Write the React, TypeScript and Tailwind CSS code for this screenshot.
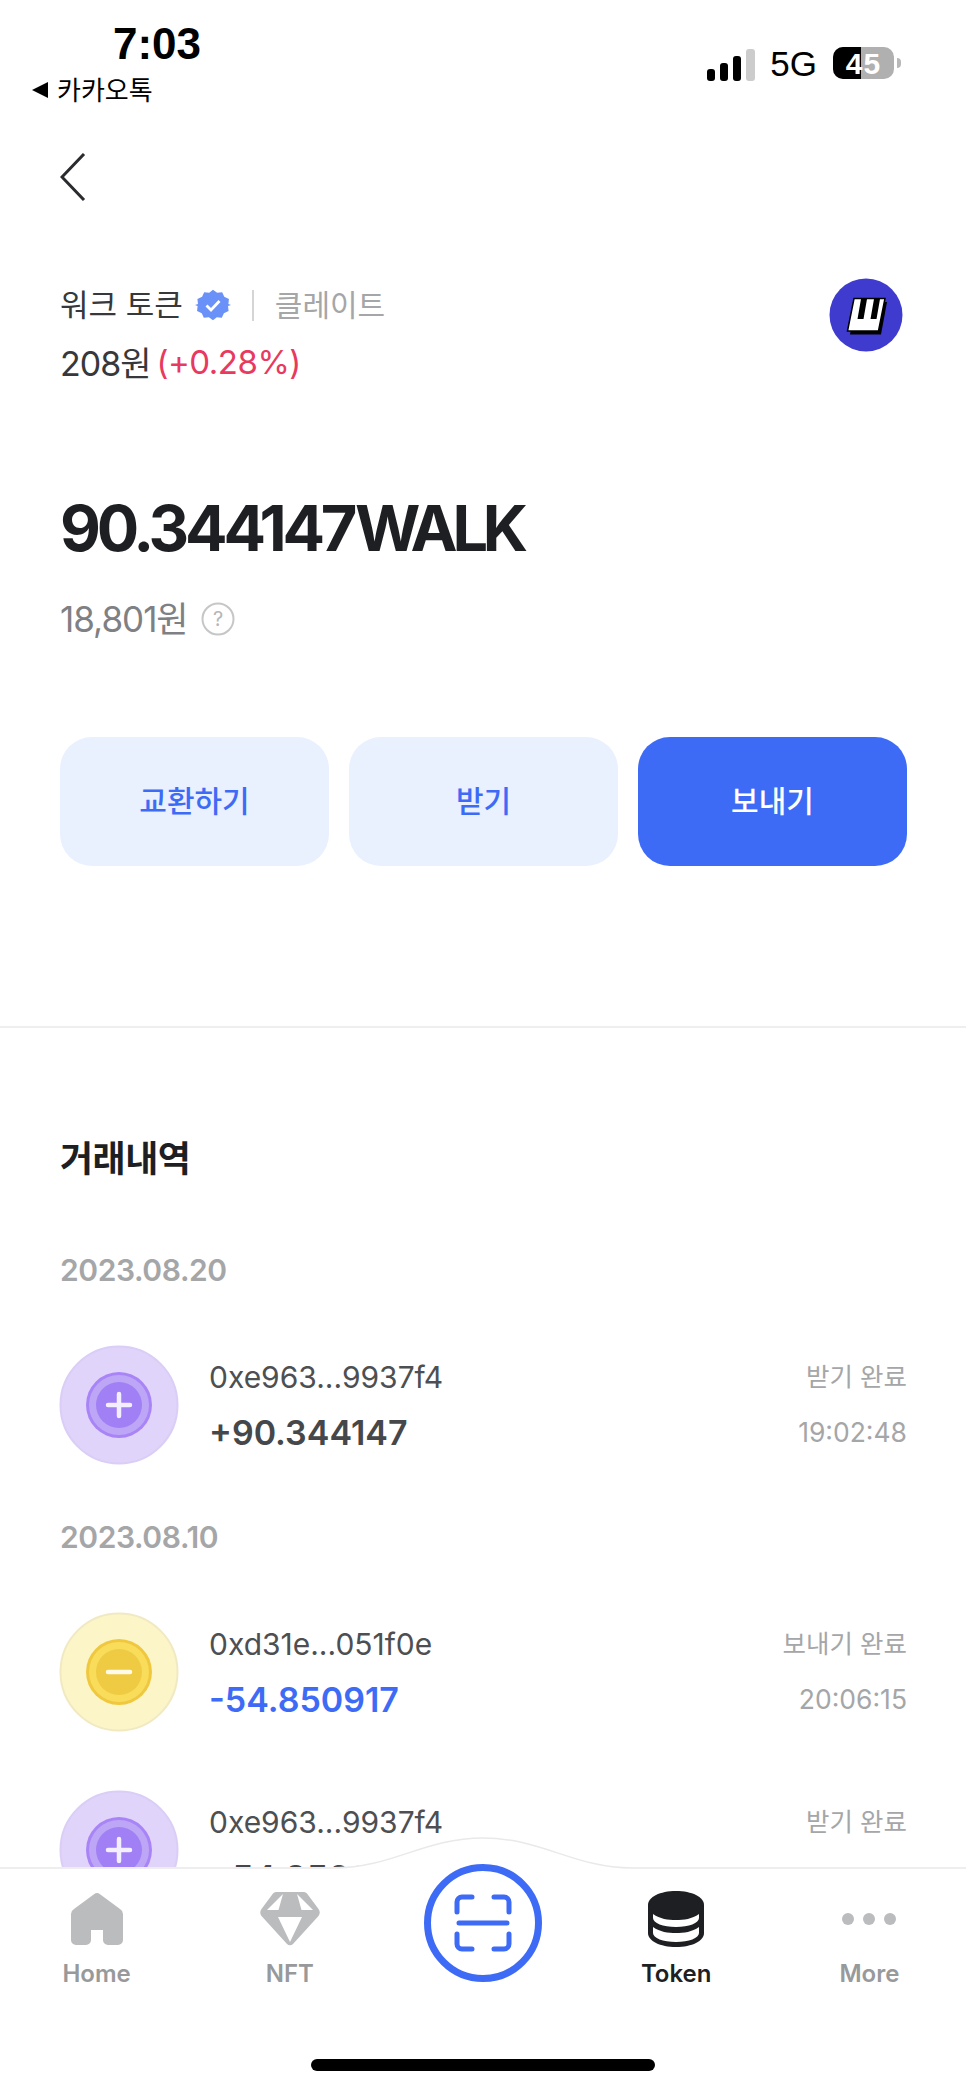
import React from 'react'

const FONT = "font-['Inter','Noto_Sans_CJK_KR',sans-serif]"

function TxIcon({ type }: { type: 'in' | 'out' }) {
  const c =
    type === 'in'
      ? { outer: '#e0d4fb', edge: '#dacdf6', ring: '#a884f6', mid: '#bea6f7', core: '#a17ff5', mark: '#f4effe' }
      : { outer: '#fcf5c8', edge: '#f1e9c1', ring: '#efc83f', mid: '#f8dc5a', core: '#efcb43', mark: '#fffbe8' }
  return (
    <svg width="120" height="120" viewBox="0 0 120 120" className="shrink-0 -ml-[1px]">
      <circle cx="60" cy="60" r="58.5" fill={c.outer} stroke={c.edge} strokeWidth="2" />
      <circle cx="60" cy="60" r="33" fill={c.ring} />
      <circle cx="60" cy="60" r="30" fill={c.mid} />
      <circle cx="60" cy="60" r="23" fill={c.core} />
      <path d={type === 'in' ? 'M49 60H71M60 49V71' : 'M49 60H71'} stroke={c.mark} strokeWidth="4.5" strokeLinecap="round" />
    </svg>
  )
}

function TxRow({ addr, amount, status, time, type, blue }: { addr: string; amount: string; status: string; time: string; type: 'in' | 'out'; blue?: boolean }) {
  return (
    <div className="flex items-center">
      <TxIcon type={type} />
      <div className="ml-[30px] flex-1">
        <div className="flex items-center justify-between h-[40px]">
          <span className="text-[30px] text-[#4d4f52]">{addr}</span>
          <span className="text-[25.5px] text-[#a5a6a8]">{status}</span>
        </div>
        <div className="flex items-center justify-between h-[40px] mt-[15px]">
          <span className={`text-[34px] font-semibold ${blue ? 'text-[#3e6bf6]' : 'text-[#45474a]'}`}>{amount}</span>
          <span className="text-[26.5px] text-[#a5a6a8]">{time}</span>
        </div>
      </div>
    </div>
  )
}

function NavItem({ label, active, children }: { label: string; active?: boolean; children: React.ReactNode }) {
  return (
    <div className="flex flex-col items-center pt-[22px]">
      <div className="h-[56px] flex items-center justify-center">{children}</div>
      <span className={`mt-[12px] text-[24px] leading-[30px] font-semibold ${active ? 'text-[#1e1f23]' : 'text-[#98999b]'}`}>{label}</span>
    </div>
  )
}

export default function App() {
  return (
    <div className={`${FONT} relative w-[966px] h-[2091px] overflow-hidden bg-white`}>
      {/* status bar */}
      <div className="flex justify-between h-[153px]">
        <div className="pl-[31px] pt-[21px]">
          <div className="pl-[82px] text-[44px] leading-[46px] font-bold text-black font-['Liberation_Sans','Noto_Sans_CJK_KR',sans-serif]">7:03</div>
          <div className="flex items-center gap-[8px] mt-[7px] h-[32px]">
            <svg width="18" height="18" viewBox="0 0 18 18"><path d="M17 1V17L1 9Z" fill="#000" /></svg>
            <span className="text-[26px] text-black">카카오톡</span>
          </div>
        </div>
        <div className="flex items-start pt-[47px] pr-[65px]">
          <svg width="48" height="32" viewBox="0 0 48 32" className="mt-[2px] ml-[2px]">
            <rect x="0" y="20" width="8" height="12" rx="3" fill="#000" />
            <rect x="13" y="14" width="8" height="18" rx="3" fill="#000" />
            <rect x="26" y="7" width="8" height="25" rx="3" fill="#000" />
            <rect x="39" y="0" width="9" height="32" rx="3" fill="#ccc" />
          </svg>
          <span className="ml-[15px] text-[35px] leading-[32px] mt-[1px] text-black font-['Liberation_Sans',sans-serif]">5G</span>
          <div className="relative ml-[16px] w-[61px] h-[32px] rounded-[10px] overflow-hidden bg-[#b0b0b0] flex items-center justify-center font-['Liberation_Sans',sans-serif]">
            <div className="absolute left-0 top-0 bottom-0 w-[28px] bg-black" />
            <span className="relative text-[30px] font-bold text-white tracking-[1px]">45</span>
          </div>
          <div className="ml-[3px] mt-[11px] w-[4px] h-[10px] rounded-r-full bg-[#b8b8b8]" />
        </div>
      </div>

      {/* back */}
      <div className="pl-[60px] h-[127px]">
        <svg width="26" height="48" viewBox="0 0 26 48" fill="none">
          <path d="M24 1L2 24L24 47" stroke="#2a2b2e" strokeWidth="3" />
        </svg>
      </div>

      {/* token summary */}
      <div className="flex justify-between px-[60px]">
        <div>
          <div className="flex items-center h-[50px]">
            <span className="text-[31px] text-[#36383b]">워크 토큰</span>
            <svg width="36" height="36" viewBox="0 0 36 36" className="ml-[12px]">
              <path
                d="M18 1l4.6 3.3 5.6-.6 2.3 5.2 5.2 2.3-.6 5.6L38 18l-3.3 1.2.6 5.6-5.2 2.3-2.3 5.2-5.6-.6L18 35l-4.6-3.3-5.6.6-2.3-5.2-5.2-2.3.6-5.6L-2 18l3.3-1.2-.6-5.6 5.2-2.3 2.3-5.2 5.6.6Z"
                transform="translate(1.8 1.8) scale(.9)"
                fill="#6a91f8"
              />
              <path d="M11.5 18.5l4.5 4.5 8.5-9" fill="none" stroke="#fff" strokeWidth="2.8" />
            </svg>
            <div className="ml-[21px] w-[2px] h-[31px] bg-[#d4d5d6]" />
            <span className="ml-[21px] text-[30px] text-[#a5a6a8]">클레이트</span>
          </div>
          <div className="flex items-center h-[50px] mt-[8px]">
            <span className="text-[34px] text-[#36383b] tracking-[-1px]">208원</span>
            <span className="ml-[6px] text-[33px] text-[#e8395f] tracking-[-0.5px]">(+0.28%)</span>
          </div>
        </div>
        <svg width="74" height="74" viewBox="0 0 74 74" className="mr-[3px] -mt-[2px]">
          <circle cx="37" cy="37" r="36.5" fill="#3e3bce" />
          <path d="M21 56.5L27 24H58L52 56.5Z" fill="#000" />
          <path d="M18.5 53L25 20.5H56L49.5 53Z" fill="#fff" stroke="#000" strokeWidth="1.5" />
          <path d="M32 21L28.5 41H34.5L38 21ZM45 21L41.5 41H47.5L51 21Z" fill="#000" />
        </svg>
      </div>

      <div className="px-[60px] mt-[102px]">
        <div className="text-[63px] leading-[76px] font-bold text-[#1e1f23] tracking-[-4.2px]">90.344147 <span className="-ml-[9px] tracking-[-5.2px]">WALK</span></div>
        <div className="flex items-center mt-[30px] h-[46px]">
          <span className="text-[35px] text-[#7f8083] tracking-[-1px]">18,801원</span>
          <svg width="34" height="34" viewBox="0 0 34 34" className="ml-[13px]" fill="none">
            <circle cx="17" cy="17" r="15.5" stroke="#c5c6c7" strokeWidth="2" />
            <text x="17" y="24" textAnchor="middle" fontSize="20" fill="#b5b6b8">?</text>
          </svg>
        </div>
      </div>

      {/* actions */}
      <div className="grid grid-cols-3 gap-[20px] pl-[60px] pr-[59px] mt-[95px]">
        <div className="h-[129px] rounded-[32px] bg-[#e9f0fe] flex items-center justify-center text-[30px] font-medium text-[#3e6bf6]">교환하기</div>
        <div className="h-[129px] rounded-[32px] bg-[#e9f0fe] flex items-center justify-center text-[30px] font-medium text-[#3e6bf6]">받기</div>
        <div className="h-[129px] rounded-[32px] bg-[#3e6bf6] flex items-center justify-center text-[30px] font-medium text-white">보내기</div>
      </div>

      <div className="mt-[160px] border-t-2 border-[#eeeeef]" />

      {/* history */}
      <div className="pl-[60px] pr-[59px]">
        <h2 className="mt-[106px] text-[36px] leading-[50px] font-bold text-[#1e1f23] tracking-[-0.5px]">거래내역</h2>
        <div className="mt-[66px] text-[30px] leading-[40px] font-semibold text-[#a5a6a8] tracking-[-0.4px]">2023.08.20</div>
        <div className="mt-[55px]">
          <TxRow addr="0xe963...9937f4" amount="+90.344147" status="받기 완료" time="19:02:48" type="in" />
        </div>
        <div className="mt-[52px] text-[30px] leading-[40px] font-semibold text-[#a5a6a8] tracking-[-0.4px]">2023.08.10</div>
        <div className="mt-[55px]">
          <TxRow addr="0xd31e...051f0e" amount="-54.850917" status="보내기 완료" time="20:06:15" type="out" blue />
        </div>
        <div className="mt-[58px]">
          <TxRow addr="0xe963...9937f4" amount="+54.850917" status="받기 완료" time="20:06:51" type="in" />
        </div>
      </div>

      {/* bottom nav */}
      <div className="absolute left-0 right-0 bottom-0 h-[224px] bg-white border-t-2 border-[#eeeeef]">
        <svg width="966" height="34" viewBox="0 0 966 34" className="absolute left-0 -top-[32px]" fill="none">
          <path d="M334 30C392 30 424 1 483 1C542 1 574 30 632 30V34H334Z" fill="#fff" />
          <path d="M334 31C392 31 424 1 483 1C542 1 574 31 632 31" stroke="#e9e9ea" strokeWidth="1.5" />
        </svg>
        <div className="relative grid grid-cols-5">
          <NavItem label="Home">
            <svg width="52" height="52" viewBox="0 0 52 52">
              <path d="M23 1.2a5 5 0 0 1 6 0L49 16a6 6 0 0 1 3 5V47a5 5 0 0 1-5 5H37a5 5 0 0 1-5-5V37H20V47a5 5 0 0 1-5 5H5a5 5 0 0 1-5-5V21a6 6 0 0 1 3-5Z" fill="#bbbcbe" />
            </svg>
          </NavItem>
          <NavItem label="NFT">
            <svg width="60" height="54" viewBox="0 0 60 54">
              <path d="M16 0H44a4 4 0 0 1 3 1.500L58.500 17a6 6 0 0 1 0 7L33 52a4 4 0 0 1-6 0L1.500 24a6 6 0 0 1 0-7L13 1.500A4 4 0 0 1 16 0Z" fill="#bbbcbe" />
              <path d="M23 2L7 18H18.500ZM37 2L53 18H41.500ZM18 25H42L30 50Z" fill="#fff" />
            </svg>
          </NavItem>
          <div className="flex justify-center -mt-[6px]">
            <svg width="120" height="120" viewBox="0 0 120 120" fill="none">
              <circle cx="60" cy="60" r="55.500" fill="#fff" stroke="#3e6bf6" strokeWidth="7" />
              <path d="M49 34H39a5 5 0 0 0-5 5V49M71 34H81a5 5 0 0 1 5 5V49M49 86H39a5 5 0 0 1-5-5V71M71 86H81a5 5 0 0 0 5-5V71M36 60H84" stroke="#3e6bf6" strokeWidth="5" strokeLinecap="round" />
            </svg>
          </div>
          <NavItem label="Token" active>
            <svg width="56" height="56" viewBox="0 0 56 56">
              <path d="M0 14C0 6 12 0 28 0S56 6 56 14V42C56 50 44 56 28 56S0 50 0 42Z" fill="#1e1f23" />
              <path d="M5 23C12 28 20 29 28 29S44 28 51 23V27C51 32 41 36 28 36S5 32 5 27ZM5 36C12 41 20 42 28 42S44 41 51 36V42C51 47 41 51 28 51S5 47 5 42Z" fill="#fff" />
            </svg>
          </NavItem>
          <NavItem label="More">
            <div className="flex gap-[9px] pb-[1px]">
              <div className="w-[12px] h-[12px] rounded-full bg-[#bbbcbe]" />
              <div className="w-[12px] h-[12px] rounded-full bg-[#bbbcbe]" />
              <div className="w-[12px] h-[12px] rounded-full bg-[#bbbcbe]" />
            </div>
          </NavItem>
        </div>
        <div className="absolute left-[311px] bottom-[20px] w-[344px] h-[12px] rounded-full bg-black" />
      </div>
    </div>
  )
}
